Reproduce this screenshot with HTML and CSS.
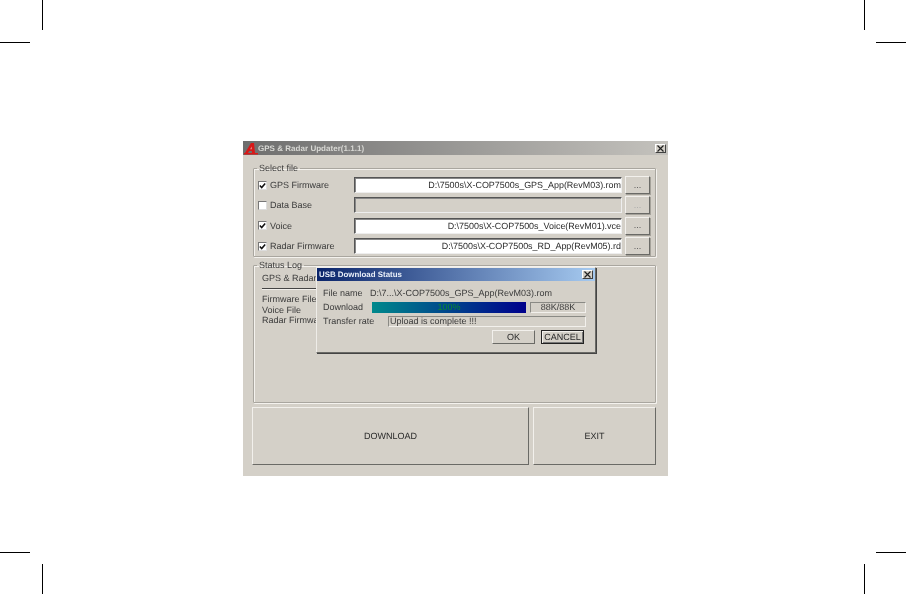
FILE: index.html
```html
<!DOCTYPE html>
<html lang="en">
<head>
<meta charset="utf-8">
<title>GPS &amp; Radar Updater</title>
<link rel="stylesheet" href="styles.css">
</head>
<body>
<div class="page">
  <i class="mark v tl"></i><i class="mark h tl"></i>
  <i class="mark v tr"></i><i class="mark h tr"></i>
  <i class="mark v bl"></i><i class="mark h bl"></i>
  <i class="mark v br"></i><i class="mark h br"></i>

  <div class="window">
    <div class="titlebar main-title">
      <svg class="logo" width="14" height="13" viewBox="0 0 14 13"><path d="M1 11 L7 1 L10 1 L11 11 L8 11 L7.8 9 L5.2 9 L4 11 Z" fill="#d81818"/><path d="M6.3 7.2 L7.7 7.2 L7.5 4.4 Z" fill="#e8b8b0"/><rect x="0" y="11" width="14" height="1.5" fill="#d81818"/></svg>
      <span class="title-text">GPS &amp; Radar Updater(1.1.1)</span>
      <span class="close main-close"><svg width="7" height="7" viewBox="0 0 7 7"><path d="M0.5 0.5 L6.5 6.5 M6.5 0.5 L0.5 6.5" stroke="#222" stroke-width="1.2"/></svg></span>
    </div>
    <div class="client">
      <fieldset class="group select-group">
        <legend>Select file</legend>
        <div class="file-row">
          <span class="check on"><svg width="7" height="7" viewBox="0 0 7 7"><path d="M0.8 3.5 L2.7 5.6 L6.2 1.4" fill="none" stroke="#111" stroke-width="1.5"/></svg></span>
          <span class="file-label">GPS Firmware</span>
          <span class="field">D:\7500s\X-COP7500s_GPS_App(RevM03).rom</span>
          <span class="btn browse">...</span>
        </div>
        <div class="file-row">
          <span class="check"></span>
          <span class="file-label">Data Base</span>
          <span class="field off"></span>
          <span class="btn browse dim">...</span>
        </div>
        <div class="file-row">
          <span class="check on"><svg width="7" height="7" viewBox="0 0 7 7"><path d="M0.8 3.5 L2.7 5.6 L6.2 1.4" fill="none" stroke="#111" stroke-width="1.5"/></svg></span>
          <span class="file-label">Voice</span>
          <span class="field">D:\7500s\X-COP7500s_Voice(RevM01).vce</span>
          <span class="btn browse">...</span>
        </div>
        <div class="file-row">
          <span class="check on"><svg width="7" height="7" viewBox="0 0 7 7"><path d="M0.8 3.5 L2.7 5.6 L6.2 1.4" fill="none" stroke="#111" stroke-width="1.5"/></svg></span>
          <span class="file-label">Radar Firmware</span>
          <span class="field">D:\7500s\X-COP7500s_RD_App(RevM05).rd</span>
          <span class="btn browse">...</span>
        </div>
      </fieldset>

      <fieldset class="group status-group">
        <legend>Status Log</legend>
        <div class="status-head">GPS &amp; Radar Updater</div>
        <div class="status-rule"></div>
        <div class="status-line">Firmware File</div>
        <div class="status-line">Voice File</div>
        <div class="status-line">Radar Firmware</div>
      </fieldset>

      <div class="actions">
        <span class="btn big grow">DOWNLOAD</span>
        <span class="btn big exit">EXIT</span>
      </div>
    </div>

    <div class="dialog">
      <div class="titlebar dlg-title">
        <span class="dlg-title-text">USB Download Status</span>
        <span class="close"><svg width="7" height="7" viewBox="0 0 7 7"><path d="M0.5 0.5 L6.5 6.5 M6.5 0.5 L0.5 6.5" stroke="#222" stroke-width="1.2"/></svg></span>
      </div>
      <div class="dlg-body">
        <div class="dlg-row name-row"><span class="dlg-label">File name</span><span>D:\7...\X-COP7500s_GPS_App(RevM03).rom</span></div>
        <div class="dlg-row bar-row"><span class="dlg-label">Download</span>
          <span class="progress">100%</span>
          <span class="sunken size">88K/88K</span>
        </div>
        <div class="dlg-row"><span class="dlg-label">Transfer rate</span><span class="sunken msg">Upload is complete !!!</span></div>
        <div class="dlg-buttons">
          <span class="btn dlg-btn">OK</span>
          <span class="btn dlg-btn default">CANCEL</span>
        </div>
      </div>
    </div>
  </div>
</div>
</body>
</html>
```

FILE: styles.css
```css
* { box-sizing: border-box; }
html, body { margin: 0; padding: 0; background: #fff; }
body { font-family: "Liberation Sans", Arial, sans-serif; font-size: 9px; color: #3a3a3a; text-rendering: geometricPrecision; }
.page { position: relative; width: 906px; height: 594px; overflow: hidden; padding: 141px 0 0 243px; }

.mark { position: absolute; background: #000; display: block; }
.mark.v { width: 1px; height: 30px; }
.mark.h { width: 30px; height: 1px; }
.mark.v.tl { left: 42px; top: 0; }
.mark.h.tl { left: 0; top: 42px; }
.mark.v.tr { left: 864px; top: 0; }
.mark.h.tr { left: 876px; top: 42px; }
.mark.v.bl { left: 42px; top: 564px; }
.mark.h.bl { left: 0; top: 552px; }
.mark.v.br { left: 864px; top: 564px; }
.mark.h.br { left: 876px; top: 552px; }

.window { position: relative; width: 425px; height: 335px; background: #d4d0c8; filter: blur(0.4px); }
.titlebar { display: flex; align-items: center; }
.main-title { height: 14px; background: linear-gradient(90deg, #6e6e6e, #c4c2bd); padding: 0 2px 0 1px; }
.logo { flex: none; }
.title-text { font: bold 8px "Liberation Sans", sans-serif; color: #d8d8d4; flex: 1; letter-spacing: 0.03px; }
.close { width: 11px; height: 9px; flex: none; background: #d4d0c8; border: 1px solid; border-color: #fff #404040 #404040 #fff; display: flex; align-items: center; justify-content: center; overflow: hidden; }
.close svg { flex: none; }

.client { padding: 8px 12px 0 10px; display: flex; flex-direction: column; }
.group { margin: 0; border: 1px solid #a9a69f; box-shadow: inset 1px 1px 0 #f4f2ee, 1px 1px 0 #f4f2ee; border-radius: 1px; min-width: 0; }
.group legend { padding: 0 2px; font-size: 9px; line-height: 10px; color: #3a3a3a; }
.select-group { height: 94px; margin-bottom: 3px; padding: 2px 3px 0 4px; display: flex; flex-direction: column; }
.select-group legend { margin-left: -1px; }
.file-row { height: 20.3px; display: flex; align-items: center; }
.check { width: 9px; height: 9px; background: #fff; border: 1px solid; border-color: #777 #ddd #ddd #777; flex: none; display: flex; align-items: center; justify-content: center; overflow: hidden; }
.check svg { flex: none; }
.file-label { width: 84px; margin-left: 3px; flex: none; }
.field { width: 268px; height: 16px; flex: none; background: #fff; border: 1px solid; border-color: #555 #eee #eee #555; box-shadow: inset 1px 1px 0 #888; text-align: right; padding-right: 0; line-height: 14px; font-size: 8.95px; white-space: nowrap; overflow: hidden; color: #2a2a2a; }
.field.off { background: #d4d0c8; }
.btn { display: flex; align-items: center; justify-content: center; background: #d4d0c8; border: 1px solid; border-color: #f2f0ec #6a6a66 #6a6a66 #f2f0ec; color: #2a2a2a; flex: none; }
.browse { width: 25px; height: 18px; margin-left: 3px; font-size: 9px; padding-bottom: 1px; color: #555; box-shadow: 1px 1px 0 #a5a29a; }
.browse.dim { color: #aaa; }

.status-group { height: 143px; padding: 3px 0 0 8px; }
.status-group legend { margin-left: -5px; }
.status-head { height: 11px; line-height: 11px; margin-bottom: 4px; }
.status-rule { width: 150px; height: 1px; margin-bottom: 5px; background: #444; box-shadow: 0 1px 0 #f2f0ec; }
.status-line { height: 10.5px; line-height: 10.5px; }

.actions { display: flex; margin-top: 4px; height: 59px; gap: 4px; }
.big { height: 58px; }
.grow { width: 277px; margin-left: -1px; }
.exit { width: 123px; }

.dialog { position: absolute; left: 73px; top: 126px; width: 280px; height: 86px; background: #d4d0c8; border: 1px solid; border-color: #eeece8 #6a6a66 #6a6a66 #eeece8; box-shadow: 1px 1px 0 #444; }
.dlg-title { height: 13px; background: linear-gradient(90deg, #0a246a, #a6caf0); padding: 0 2px 0 1px; }
.dlg-title-text { flex: 1; font: bold 7.9px "Liberation Sans", sans-serif; color: #e8eef8; padding-left: 1px; }
.dlg-body { padding: 5px 9px 0 6px; font-size: 9px; }
.dlg-row { display: flex; align-items: center; height: 14px; white-space: nowrap; }
.dlg-label { width: 47px; flex: none; }
.bar-row .dlg-label { width: 49px; }
.progress { width: 154px; height: 11px; flex: none; background: linear-gradient(90deg, #00898c, #00008c); display: flex; align-items: center; justify-content: center; color: #0a8a30; }
.sunken { display: flex; align-items: center; height: 11px; border: 1px solid; border-color: #8a8a85 #f2f0ec #f2f0ec #8a8a85; }
.size { width: 56px; margin-left: 4px; justify-content: center; }
.msg { width: 198px; margin-left: 18px; padding-left: 1px; }
.dlg-buttons { display: flex; justify-content: flex-end; gap: 6px; margin-top: 2px; padding-right: 2px; }
.dlg-btn { width: 43px; height: 14px; font-size: 9px; }
.dlg-btn.default { border-color: #222; box-shadow: inset 1px 1px 0 #f2f0ec, inset -1px -1px 0 #777; }
```
